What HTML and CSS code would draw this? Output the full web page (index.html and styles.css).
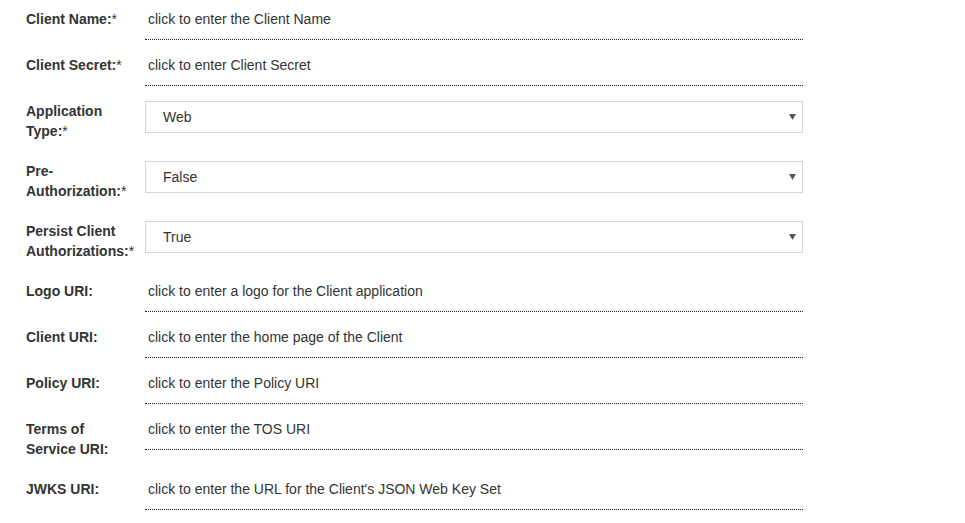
FILE: index.html
```html
<!DOCTYPE html>
<html>
<head>
<meta charset="utf-8">
<link rel="stylesheet" href="styles.css">
</head>
<body>
<form class="form">
  <div class="row"><label class="lbl">Client Name:<span class="req">*</span></label><div class="val"><span class="edit">click to enter the Client Name</span></div></div>
  <div class="row"><label class="lbl">Client Secret:<span class="req">*</span></label><div class="val"><span class="edit">click to enter Client Secret</span></div></div>
  <div class="row"><label class="lbl">Application Type:<span class="req">*</span></label><div class="val"><div class="sel"><span>Web</span><svg class="arrow" width="7" height="6" viewBox="0 0 7 6"><path d="M0 0H7L3.5 6Z"/></svg></div></div></div>
  <div class="row"><label class="lbl">Pre-Authorization:<span class="req">*</span></label><div class="val"><div class="sel"><span>False</span><svg class="arrow" width="7" height="6" viewBox="0 0 7 6"><path d="M0 0H7L3.5 6Z"/></svg></div></div></div>
  <div class="row"><label class="lbl">Persist Client Authorizations:<span class="req">*</span></label><div class="val"><div class="sel"><span>True</span><svg class="arrow" width="7" height="6" viewBox="0 0 7 6"><path d="M0 0H7L3.5 6Z"/></svg></div></div></div>
  <div class="row"><label class="lbl">Logo URI:</label><div class="val"><span class="edit">click to enter a logo for the Client application</span></div></div>
  <div class="row"><label class="lbl">Client URI:</label><div class="val"><span class="edit">click to enter the home page of the Client</span></div></div>
  <div class="row"><label class="lbl">Policy URI:</label><div class="val"><span class="edit">click to enter the Policy URI</span></div></div>
  <div class="row"><label class="lbl">Terms of Service URI:</label><div class="val"><span class="edit">click to enter the TOS URI</span></div></div>
  <div class="row"><label class="lbl">JWKS URI:</label><div class="val"><span class="edit">click to enter the URL for the Client's JSON Web Key Set</span></div></div>
</form>
</body>
</html>
```
FILE: styles.css
```css
html, body {
  margin: 0;
  padding: 0;
  background: #fff;
}
body {
  font-family: "Liberation Sans", Arial, sans-serif;
  font-size: 14px;
  line-height: 20px;
  color: #333;
}
.form {
  padding: 9px 0 0 26px;
}
.row {
  display: flex;
  align-items: flex-start;
  margin-bottom: 15px;
}
.lbl {
  width: 111px;
  margin-right: 8px;
  margin-bottom: 5px;
  font-weight: bold;
  color: #333;
}
.req {
  font-weight: normal;
}
.val {
  width: 658px;
}
.edit {
  display: block;
  padding: 0 3px 10px 3px;
  border-bottom: 1px dotted #222;
  color: #333;
}
.sel {
  box-sizing: border-box;
  height: 32px;
  border: 1px solid #d4d4dc;
  display: flex;
  align-items: center;
  justify-content: space-between;
  padding: 0 6px 0 17px;
  color: #333;
}
.arrow {
  fill: #555;
}
```
